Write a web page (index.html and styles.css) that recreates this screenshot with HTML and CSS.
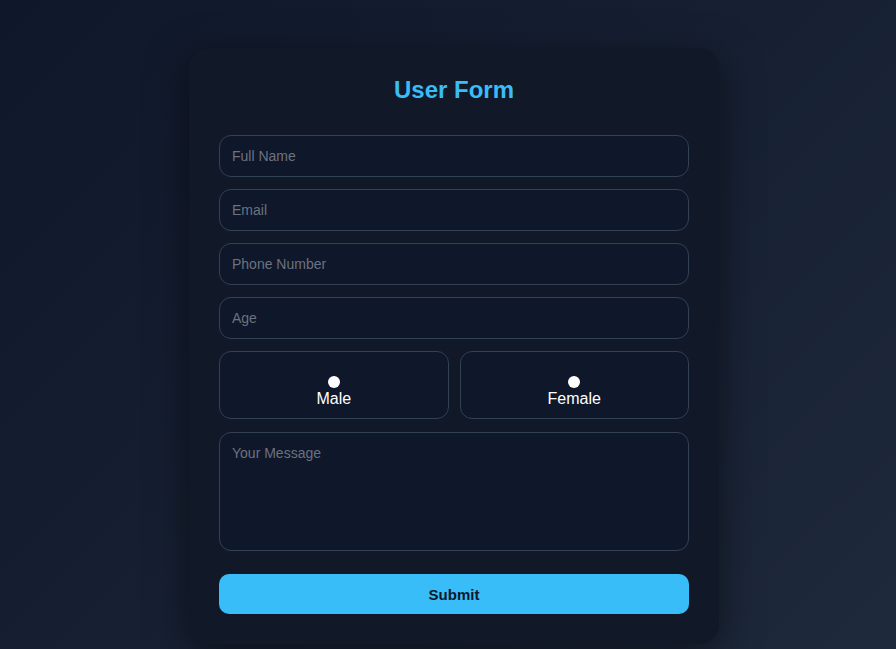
FILE: index.html
```html
<!DOCTYPE html>
<html lang="en">
<head>
<meta charset="utf-8">
<title>User Form</title>
<link rel="stylesheet" href="styles.css">
</head>
<body>
<main class="page">
  <form class="card">
    <h2 class="title">User Form</h2>
    <input class="field" type="text" placeholder="Full Name">
    <input class="field" type="email" placeholder="Email">
    <input class="field" type="tel" placeholder="Phone Number">
    <input class="field" type="number" placeholder="Age">
    <div class="gender">
      <label class="option"><input class="radio" type="radio" name="gender"><span>Male</span></label>
      <label class="option"><input class="radio" type="radio" name="gender"><span>Female</span></label>
    </div>
    <textarea class="message" placeholder="Your Message"></textarea>
    <button class="submit" type="button">Submit</button>
  </form>
</main>
</body>
</html>
```
FILE: styles.css
```css
html, body {
  margin: 0;
  height: 100%;
}
body {
  background: linear-gradient(135deg, #0f172a 0%, #1e293b 100%);
  font-family: "Liberation Sans", Arial, sans-serif;
  overflow: hidden;
}
.page {
  display: flex;
  justify-content: center;
  padding-top: 48px;
  padding-left: 12px;
}
.card {
  width: 470px;
  padding: 26px 30px 30px;
  background: #111827;
  border-radius: 20px;
  box-shadow: 0 10px 40px rgba(0, 0, 0, 0.5);
  display: flex;
  flex-direction: column;
}
.title {
  margin: 0 0 29px;
  text-align: center;
  color: #38bdf8;
  font-size: 24px;
  line-height: 32px;
  font-weight: bold;
}
.field {
  box-sizing: border-box;
  height: 42px;
  margin: 0 0 12px;
  padding: 0 12px;
  background: #0f172a;
  border: 1px solid #334155;
  border-radius: 12px;
  color: #e2e8f0;
  font-family: inherit;
  font-size: 14px;
  outline: none;
}
.field::placeholder, .message::placeholder {
  color: #6b7280;
}
.gender {
  display: grid;
  grid-template-columns: 1fr 1fr;
  gap: 11px;
  margin-bottom: 13px;
}
.option {
  box-sizing: border-box;
  height: 68px;
  background: #0f172a;
  border: 1px solid #334155;
  border-radius: 12px;
  display: flex;
  flex-direction: column;
  align-items: center;
  justify-content: center;
  padding-top: 13px;
  color: #ffffff;
  font-size: 16px;
}
.radio {
  appearance: none;
  width: 12px;
  height: 12px;
  margin: 0 0 2px;
  border-radius: 50%;
  background: #ffffff;
}
.message {
  box-sizing: border-box;
  height: 119px;
  padding: 12px;
  background: #0f172a;
  border: 1px solid #334155;
  border-radius: 12px;
  color: #e2e8f0;
  font-family: inherit;
  font-size: 14px;
  resize: none;
  outline: none;
  margin-bottom: 23px;
}
.submit {
  height: 40px;
  border: none;
  border-radius: 10px;
  background: #38bdf8;
  color: #0f172a;
  font-family: inherit;
  font-size: 15px;
  font-weight: bold;
}
```
